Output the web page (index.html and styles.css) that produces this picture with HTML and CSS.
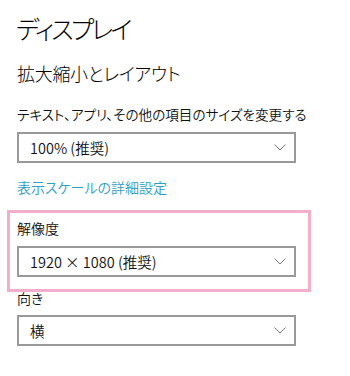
FILE: index.html
```html
<!DOCTYPE html>
<html lang="ja">
<head>
<meta charset="utf-8">
<link rel="stylesheet" href="styles.css">
</head>
<body>
<div class="page">
  <h1 class="title">ディスプレイ</h1>
  <h2 class="heading">拡大縮小とレイアウト</h2>
  <div class="label label-first">テキスト、アプリ、その他の項目のサイズを変更する</div>
  <div class="select">
    <span class="value">100% (推奨)</span>
    <svg class="chev" width="12" height="7" viewBox="0 0 12 7"><polyline points="0.5,0.5 6,6 11.5,0.5" fill="none" stroke="#7a7a7a" stroke-width="1"/></svg>
  </div>
  <div class="link">表示スケールの詳細設定</div>
  <div class="highlight">
    <div class="label">解像度</div>
    <div class="select">
      <span class="value">1920 × 1080 (推奨)</span>
      <svg class="chev" width="12" height="7" viewBox="0 0 12 7"><polyline points="0.5,0.5 6,6 11.5,0.5" fill="none" stroke="#7a7a7a" stroke-width="1"/></svg>
    </div>
  </div>
  <div class="label label-orient">向き</div>
  <div class="select select-orient">
    <span class="value">横</span>
    <svg class="chev" width="12" height="7" viewBox="0 0 12 7"><polyline points="0.5,0.5 6,6 11.5,0.5" fill="none" stroke="#7a7a7a" stroke-width="1"/></svg>
  </div>
</div>
</body>
</html>
```
FILE: styles.css
```css
html, body {
  margin: 0;
  padding: 0;
  background: #ffffff;
}
body {
  font-family: "Noto Sans CJK JP", "Noto Sans", sans-serif;
  font-feature-settings: "palt";
  color: #000;
}
.page {
  display: flex;
  flex-direction: column;
  align-items: flex-start;
  padding: 0 0 0 17px;
}
.title {
  margin: 12px 0 0 -1px;
  font-size: 25px;
  line-height: 32px;
  font-weight: 300;
  letter-spacing: -2.8px;
}
.heading {
  margin: 17px 0 0 0;
  font-size: 18px;
  line-height: 24px;
  font-weight: 300;
  letter-spacing: -0.3px;
}
.label {
  font-size: 14px;
  line-height: 18px;
  font-weight: 350;
  color: #111;
}
.label-first {
  font-size: 13.6px;
  margin-top: 20px;
}
.select {
  box-sizing: border-box;
  width: 279px;
  height: 31px;
  border: 2px solid #999999;
  margin-top: 9px;
  display: flex;
  align-items: center;
  justify-content: space-between;
  padding: 0 8px 0 11px;
  background: #fff;
}
.value {
  font-family: "Noto Sans CJK JP", sans-serif;
  font-size: 14.5px;
  line-height: 18px;
  font-weight: 350;
  color: #111;
}
.chev {
  display: block;
}
.link {
  margin-top: 15px;
  font-size: 14px;
  line-height: 18px;
  font-weight: 350;
  color: #2f9fc1;
}
.highlight {
  margin: 14px 0 0 -10px;
  border: 3px solid #f2aeca;
  padding: 6px 12px 12px 7px;
}
.label-orient {
  margin-top: -3px;
}
.select-orient {
  margin-top: 8px;
}
```
